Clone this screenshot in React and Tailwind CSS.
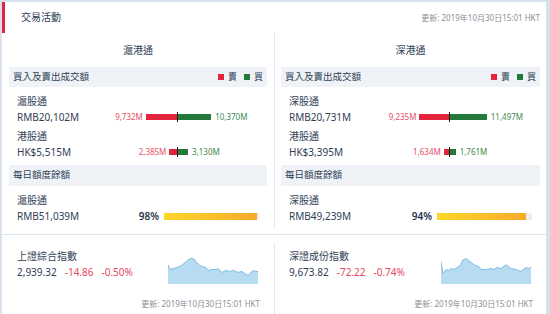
import React from "react";

const SELL = "#e3253b";
const BUY = "#22793a";

const markets = [
  {
    title: "滬港通",
    north: { name: "滬股通", total: "RMB20,102M", sell: 9732, buy: 10370 },
    south: { name: "港股通", total: "HK$5,515M", sell: 2385, buy: 3130 },
    quota: { name: "滬股通", amount: "RMB51,039M", pct: 98 },
  },
  {
    title: "深港通",
    north: { name: "深股通", total: "RMB20,731M", sell: 9235, buy: 11497 },
    south: { name: "港股通", total: "HK$3,395M", sell: 1634, buy: 1761 },
    quota: { name: "深股通", amount: "RMB49,239M", pct: 94 },
  },
];

const indices = [
  {
    name: "上證綜合指數",
    value: "2,939.32",
    change: "-14.86",
    pct: "-0.50%",
    pts: [
      [0, 8], [2, 13], [5, 12], [9, 11], [13, 9], [17, 6], [20, 3], [23, 1.5], [26, 2], [28, 5],
      [32, 9], [35, 10], [38, 11], [40, 14], [44, 13], [48, 13], [50, 12], [54, 16], [58, 14],
      [62, 15], [65, 14], [70, 16], [74, 15], [78, 18], [80, 19], [82, 17], [85, 14], [88, 15], [90, 15],
    ],
  },
  {
    name: "深證成份指數",
    value: "9,673.82",
    change: "-72.22",
    pct: "-0.74%",
    pts: [
      [0, 5], [2, 17], [5, 13], [8, 14], [10, 12], [13, 13], [16, 11], [19, 9], [22, 3], [25, 1.5],
      [28, 4], [33, 8], [38, 10], [40, 13], [45, 13], [50, 12], [53, 13], [56, 11], [60, 12],
      [65, 8], [70, 12], [75, 13], [80, 15], [82, 13], [85, 11], [88, 12], [90, 10],
    ],
  },
];

const fmt = (n) => n.toLocaleString("en-US");

function Updated() {
  return (
    <span className="text-[8px] text-[#8c8f94] whitespace-nowrap">
      更新: 2019年10月30日15:01 HKT
    </span>
  );
}

function TradeRow({ row }) {
  const scale = 0.0032;
  return (
    <div className="pl-[8px]">
      <div className="h-[16px] leading-[16px]">{row.name}</div>
      <div className="flex h-[16px] items-center">
        <div className="flex w-[160px] items-center">
          <span className="flex-1">{row.total}</span>
          <span className="mr-[3px] text-[8px] text-[#e6505f]">{fmt(row.sell)}M</span>
          <span className="h-[6px]" style={{ width: row.sell * scale, background: SELL }} />
        </div>
        <span className="h-[10px] w-px bg-[#1d1d1d]" />
        <span className="h-[6px]" style={{ width: row.buy * scale, background: BUY }} />
        <span className="ml-[4px] text-[8px] text-[#3c8a52]">{fmt(row.buy)}M</span>
      </div>
    </div>
  );
}

function Market({ m }) {
  return (
    <div className="pt-[7px] pb-[4px]">
      <div className="h-[20px] text-center text-[10px] leading-[20px]">{m.title}</div>

      <div className="mt-[7px] flex h-[20px] items-center justify-between bg-[#eff3f7] px-[4px] text-[9.5px]">
        <span>買入及賣出成交額</span>
        <div className="flex items-center text-[9px]">
          <span className="h-[6px] w-[6px] bg-[#e3253b]" />
          <span className="ml-[4px]">賣</span>
          <span className="ml-[7px] h-[6px] w-[6px] bg-[#22793a]" />
          <span className="ml-[4px]">買</span>
        </div>
      </div>

      <div className="mt-[6px]">
        <TradeRow row={m.north} />
      </div>
      <div className="mt-[3px]">
        <TradeRow row={m.south} />
      </div>

      <div className="mt-[5px] flex h-[21px] items-center bg-[#eff3f7] px-[4px] text-[9.5px]">
        每日額度餘額
      </div>

      <div className="mt-[6px] pl-[8px]">
        <div className="h-[16px] leading-[16px]">{m.quota.name}</div>
        <div className="flex h-[16px] items-center">
          <span className="flex-1">{m.quota.amount}</span>
          <span className="font-semibold text-[#23344a]">{m.quota.pct}%</span>
          <div className="ml-[5px] mr-[8px] h-[7px] w-[95px] bg-[#eceff2]">
            <div
              className="h-full bg-gradient-to-r from-[#fcd628] to-[#f6aa2c]"
              style={{ width: `${m.quota.pct}%` }}
            />
          </div>
        </div>
      </div>
    </div>
  );
}

function Spark({ pts }) {
  const line = pts.map((p) => p.join(",")).join(" ");
  const area = `0,28 ${line} 90,28`;
  return (
    <svg width="90" height="27" viewBox="0 0 90 28" preserveAspectRatio="none">
      <polygon points={area} fill="#b7dcf1" />
      <polyline points={line} fill="none" stroke="#7dbce2" strokeWidth="1" />
    </svg>
  );
}

function IndexCard({ idx }) {
  return (
    <div className="flex flex-col pt-[14px] pb-[5px]">
      <div className="flex">
        <div className="flex-1 pl-[8px]">
          <div className="h-[15px] text-[10px] leading-[15px]">{idx.name}</div>
          <div className="flex h-[16px] items-center text-[10px]">
            <span>{idx.value}</span>
            <span className="ml-[8px] text-[#e6475a]">{idx.change}</span>
            <span className="ml-[8px] text-[#e6475a]">{idx.pct}</span>
          </div>
        </div>
        <div className="mt-[8px] mr-[9px]">
          <Spark pts={idx.pts} />
        </div>
      </div>
      <div className="mt-[14px] flex h-[12px] items-center justify-end pr-[7px]">
        <Updated />
      </div>
    </div>
  );
}

export default function App() {
  return (
    <div className="h-[314px] w-[550px] overflow-hidden bg-[#d8e2ec] pt-[2px] pl-[2px] pr-[4px] font-['Noto_Sans','Noto_Sans_CJK_TC',sans-serif] text-[10px] text-[#2e3e54]">
      <div className="h-full bg-white">
        <div className="flex h-[31px] items-center justify-between border-l-[3px] border-[#e3253b] pl-[16px] pr-[6px]">
          <span className="text-[10px]">交易活動</span>
          <Updated />
        </div>

        <div className="flex">
          <div className="w-[272px] px-[7px]">
            <Market m={markets[0]} />
          </div>
          <div className="w-px bg-[#dfe6ee]" />
          <div className="flex-1 pl-[6px] pr-[6px]">
            <Market m={markets[1]} />
          </div>
        </div>

        <div className="mt-[6px] flex border-t border-[#dbe3ec]">
          <div className="w-[272px] px-[1px]">
            <div className="px-[6px]">
              <IndexCard idx={indices[0]} />
            </div>
          </div>
          <div className="mt-[8px] w-px bg-[#dfe6ee]" />
          <div className="flex-1 pl-[6px] pr-[6px]">
            <IndexCard idx={indices[1]} />
          </div>
        </div>
      </div>
    </div>
  );
}
